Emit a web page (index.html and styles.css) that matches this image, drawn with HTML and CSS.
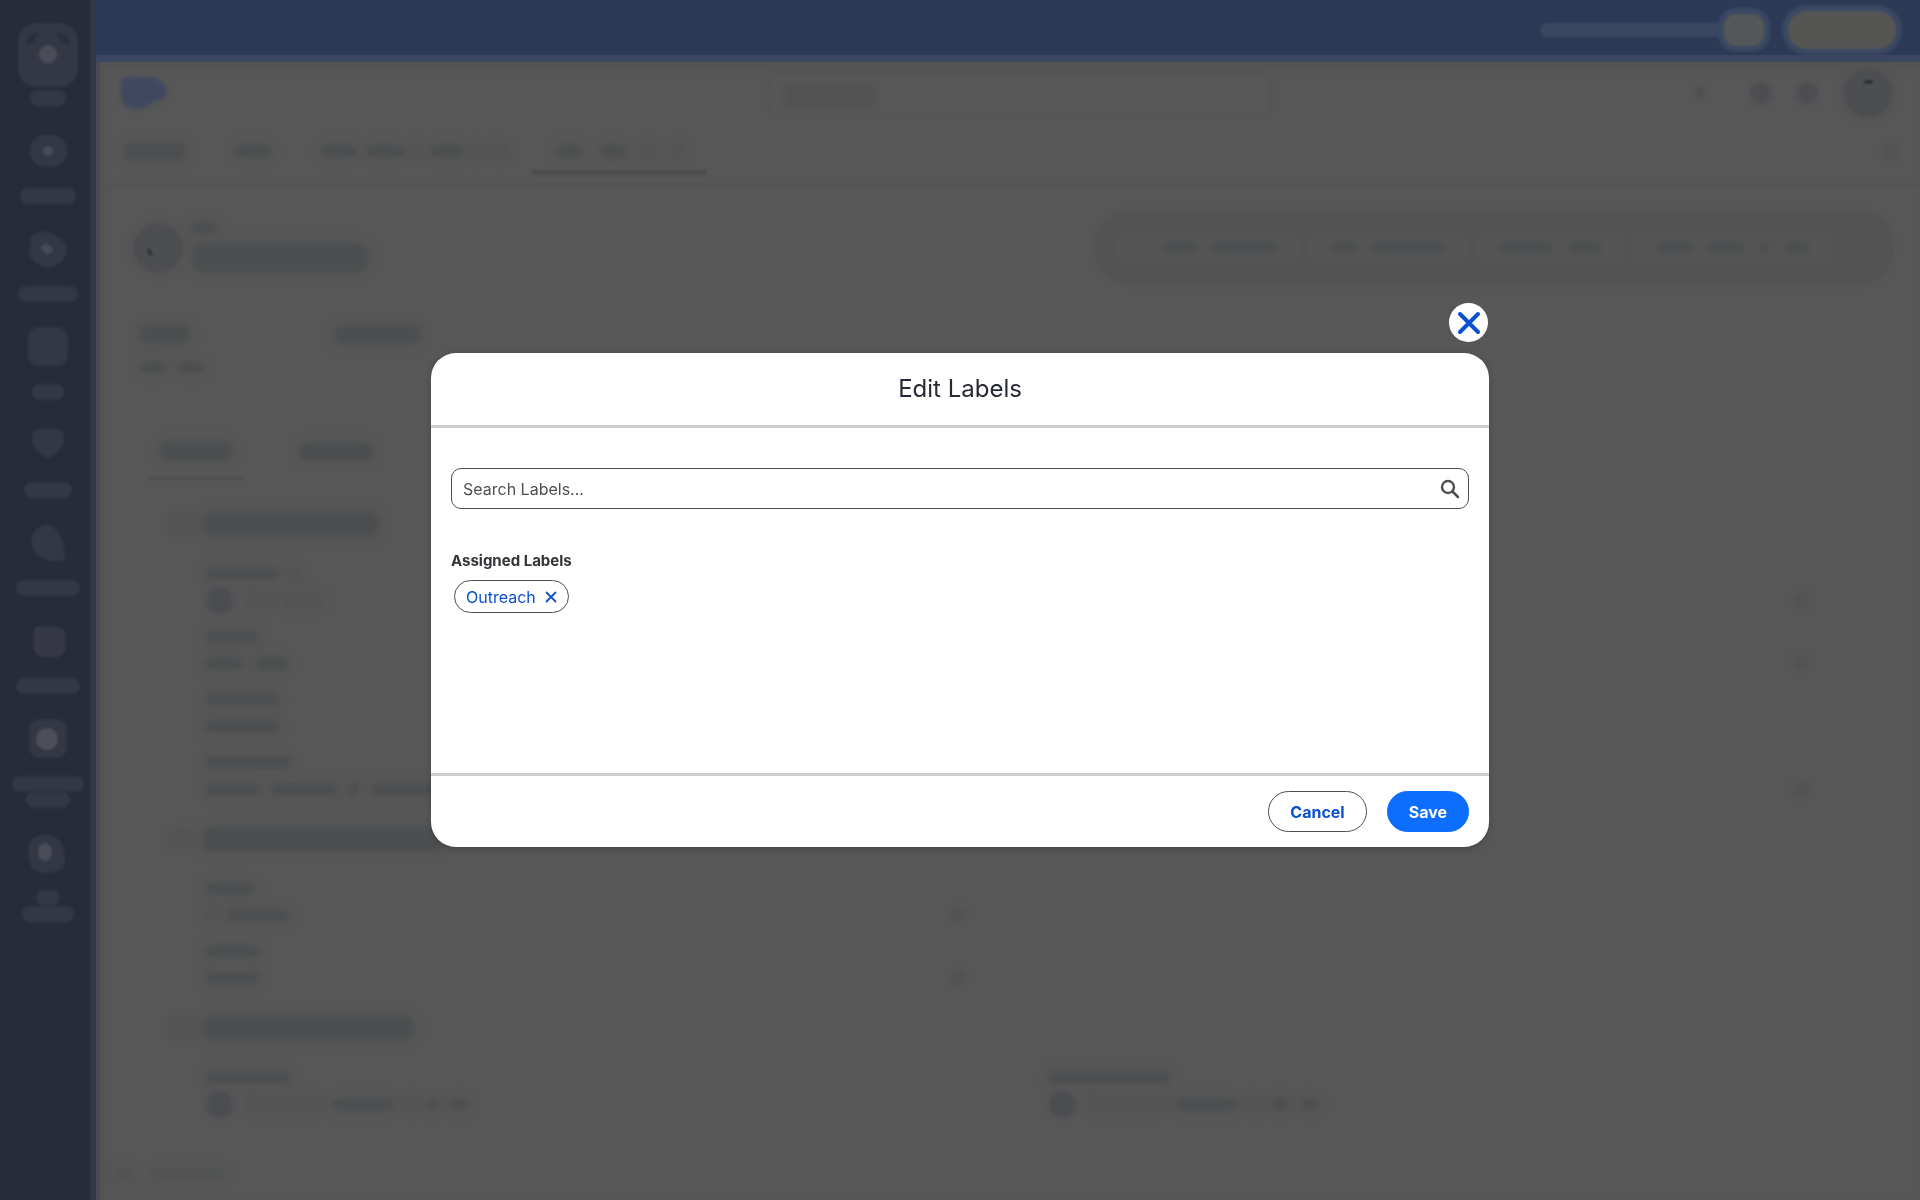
FILE: index.html
```html
<!DOCTYPE html>
<html lang="en">
<head>
    <meta charset="UTF-8">
    <meta name="viewport" content="width=device-width, initial-scale=1.0">
    <title>Edit Labels</title>
    <link rel="stylesheet" href="styles.css">
</head>
<body>
    <div class="app" aria-hidden="true">
        <div class="sidebar">
            <div class="brand">
                <svg width="60" height="64" viewBox="0 0 60 64">
                    <rect width="60" height="64" rx="18" fill="#333844"/>
                    <path d="M9 22 Q9 9 20 10 Q15 22 9 22 Z M51 22 Q51 9 38 10 Q44 22 51 22 Z" fill="#2a2f3c"/>
                    <circle cx="30" cy="31" r="9" fill="#4a4d57"/>
                </svg>
                <span class="nav-label w-36"></span>
            </div>
            <div class="nav-item">
                <svg width="40" height="40" viewBox="0 0 40 40">
                    <rect x="2" y="4" width="37" height="32" rx="15" fill="#333844"/>
                    <circle cx="20" cy="20" r="5" fill="#464b5a"/>
                </svg>
                <span class="nav-label w-56"></span>
            </div>
            <div class="nav-item">
                <svg width="40" height="40" viewBox="0 0 40 40">
                    <path d="M3 8 Q10 -1 22 4 Q38 11 39 20 Q37 37 20 38 Q5 37 1 24 Z" fill="#333844"/>
                    <path d="M12 19 L18 14 L26 21 L19 26 Z" fill="#464b5a"/>
                </svg>
                <span class="nav-label w-60"></span>
            </div>
            <div class="nav-item">
                <svg width="40" height="40" viewBox="0 0 40 40">
                    <rect width="40" height="39" rx="11" fill="#333844"/>
                </svg>
                <span class="nav-label w-32"></span>
            </div>
            <div class="nav-item">
                <svg width="40" height="40" viewBox="0 0 40 40">
                    <path d="M6 6 Q20 0 34 6 Q40 18 30 26 Q20 38 12 28 Q-1 18 6 6 Z" fill="#333844"/>
                </svg>
                <span class="nav-label w-48"></span>
            </div>
            <div class="nav-item">
                <svg width="40" height="40" viewBox="0 0 40 40">
                    <path d="M3 17 Q6 2 20 2 Q31 4 36 22 L37 38 L24 38 Q4 35 3 17 Z" fill="#333844"/>
                </svg>
                <span class="nav-label w-64"></span>
            </div>
            <div class="nav-item">
                <svg width="40" height="40" viewBox="0 0 40 40">
                    <path d="M6 8 Q9 4 19 5 L34 7 Q38 11 38 17 L37 30 Q31 39 20 36 Q8 37 6 28 Z" fill="#363945"/>
                </svg>
                <span class="nav-label w-64"></span>
            </div>
            <div class="nav-item">
                <svg width="40" height="40" viewBox="0 0 40 40">
                    <rect x="1" width="38" height="39" rx="11" fill="#333844"/>
                    <circle cx="19" cy="20" r="11" fill="#4c4f58"/>
                </svg>
                <div class="nav-lines">
                    <span class="nav-label w-72"></span>
                    <span class="nav-label w-44"></span>
                </div>
            </div>
            <div class="nav-item">
                <svg width="40" height="40" viewBox="0 0 40 40">
                    <path d="M3 7 Q18 -5 33 9 Q40 25 35 35 Q20 45 4 35 Q-3 20 3 7 Z" fill="#333844"/>
                    <ellipse cx="17" cy="19" rx="7" ry="9" fill="#4a4d57"/>
                </svg>
                <div class="nav-lines">
                    <span class="nav-label w-24"></span>
                    <span class="nav-label w-52"></span>
                </div>
            </div>
        </div>

        <div class="main">
            <div class="topbar">
                <span class="topbar-text"></span>
                <span class="topbar-badge"></span>
                <span class="topbar-button"></span>
            </div>

            <div class="page">
                <div class="header">
                    <svg class="cloud" width="48" height="34" viewBox="0 0 48 34">
                        <path d="M2 3 Q12 -1 20 1 L36 2 Q48 8 48 15 Q47 24 35 26 Q25 34 17 33 Q6 34 2 24 Z" fill="#3f485f"/>
                    </svg>
                    <div class="search-box"><span class="search-hint"></span></div>
                    <div class="header-icons">
                        <span class="pin"></span>
                        <span class="dot"></span>
                        <span class="dot"></span>
                        <svg class="avatar-large" width="48" height="48" viewBox="0 0 48 48">
                            <rect x="20" y="11" width="9" height="4" rx="2" fill="#2f3032"/>
                        </svg>
                    </div>
                </div>

                <div class="tabs">
                    <div class="tab"><span class="bar bar-tall w-60"></span></div>
                    <div class="tab"><span class="bar w-36"></span></div>
                    <div class="tab">
                        <span class="bar w-36"></span>
                        <span class="bar w-36"></span>
                        <span class="bar faint w-8"></span>
                        <span class="bar w-32"></span>
                        <span class="bar faint w-8"></span>
                        <span class="bar faint w-16"></span>
                    </div>
                    <div class="tab tab-active">
                        <span class="bar w-24"></span>
                        <span class="bar w-24"></span>
                        <span class="bar faint w-8"></span>
                        <span class="bar faint w-8"></span>
                    </div>
                    <span class="pencil"></span>
                </div>

                <div class="record">
                    <svg class="avatar-large" width="48" height="48" viewBox="0 0 48 48">
                        <path d="M13 24 L16 25 L19 32 L15 31 Z" fill="#2f3032"/>
                    </svg>
                    <div class="record-title">
                        <span class="bar w-24"></span>
                        <span class="bar bar-title w-176"></span>
                    </div>
                    <div class="actions">
                        <div class="action"><span class="bar faint w-8"></span><span class="bar w-32"></span><span class="bar w-64"></span></div>
                        <div class="action"><span class="bar w-24"></span><span class="bar w-72"></span></div>
                        <div class="action"><span class="bar w-52"></span><span class="bar w-32"></span></div>
                        <div class="action"><span class="bar w-36"></span><span class="bar w-36"></span><span class="bar w-8"></span><span class="bar w-24"></span></div>
                        <span class="bar faint w-16"></span>
                    </div>
                </div>

                <div class="facts">
                    <div class="fact">
                        <span class="bar bar-tall w-48"></span>
                        <div class="words"><span class="bar w-24"></span><span class="bar w-24"></span></div>
                    </div>
                    <div class="fact"><span class="bar bar-tall w-84"></span></div>
                </div>

                <div class="subtabs">
                    <div class="subtab subtab-active"><span class="bar bar-tall w-72"></span></div>
                    <div class="subtab"><span class="bar bar-tall w-72"></span></div>
                </div>

                <div class="section">
                    <div class="section-head"><span class="chevron"></span><span class="bar bar-heading w-176"></span></div>
                    <div class="rows">
                        <div class="cell">
                            <div class="words"><span class="bar w-72"></span><span class="bar faint w-8"></span></div>
                            <div class="value"><span class="avatar"></span><span class="bar faint w-24"></span><span class="bar faint w-36"></span></div>
                        </div>
                        <div class="cell"><div class="value"><span class="pencil"></span></div></div>
                        <div class="cell">
                            <div class="words"><span class="bar w-52"></span></div>
                            <div class="value"><span class="bar w-36"></span><span class="bar w-32"></span></div>
                        </div>
                        <div class="cell"><div class="value"><span class="pencil"></span></div></div>
                        <div class="cell">
                            <div class="words"><span class="bar w-72"></span></div>
                            <div class="value"><span class="bar w-72"></span></div>
                        </div>
                        <div class="cell"></div>
                        <div class="cell">
                            <div class="words"><span class="bar w-84"></span></div>
                            <div class="value"><span class="bar w-52"></span><span class="bar w-64"></span><span class="bar w-8"></span><span class="bar w-84"></span></div>
                        </div>
                        <div class="cell"><div class="value"><span class="pencil"></span></div></div>
                    </div>
                </div>

                <div class="section">
                    <div class="section-head"><span class="chevron"></span><span class="bar bar-heading w-240"></span></div>
                    <div class="rows">
                        <div class="cell">
                            <div class="words"><span class="bar w-48"></span></div>
                            <div class="value"><span class="bar faint w-8"></span><span class="bar w-60"></span><span class="pencil"></span></div>
                        </div>
                        <div class="cell"></div>
                        <div class="cell">
                            <div class="words"><span class="bar w-52"></span></div>
                            <div class="value"><span class="bar w-52"></span><span class="pencil"></span></div>
                        </div>
                        <div class="cell"></div>
                    </div>
                </div>

                <div class="section">
                    <div class="section-head"><span class="chevron"></span><span class="bar bar-heading w-212"></span></div>
                    <div class="rows">
                        <div class="cell">
                            <div class="words"><span class="bar w-84"></span></div>
                            <div class="value"><span class="avatar"></span><span class="bar faint w-72"></span><span class="bar w-60"></span><span class="bar faint w-8"></span><span class="bar w-8"></span><span class="bar w-16"></span></div>
                        </div>
                        <div class="cell">
                            <div class="words"><span class="bar w-120"></span></div>
                            <div class="value"><span class="avatar"></span><span class="bar faint w-72"></span><span class="bar w-60"></span><span class="bar faint w-8"></span><span class="bar w-16"></span><span class="bar w-16"></span></div>
                        </div>
                    </div>
                </div>

                <div class="utility"><span class="bar faint w-16"></span><span class="bar faint w-72"></span></div>
            </div>
        </div>
    </div>

    <div class="overlay">
        <div class="modal" role="dialog" aria-labelledby="modal-title">
            <button class="modal-close" type="button" aria-label="Close">
                <svg width="24" height="24" viewBox="0 0 24 24">
                    <path d="M3 3 L21 21 M21 3 L3 21" stroke="#0b50d0" stroke-width="4" stroke-linecap="round"/>
                </svg>
            </button>
            <div class="modal-header">
                <h2 id="modal-title">Edit Labels</h2>
            </div>
            <div class="modal-body">
                <div class="search">
                    <input type="text" placeholder="Search Labels..." aria-label="Search Labels">
                    <svg width="20" height="20" viewBox="0 0 20 20">
                        <circle cx="8" cy="8" r="6" fill="none" stroke="#4f4f4f" stroke-width="2.4"/>
                        <path d="M12.5 12.5 L18 18" stroke="#4f4f4f" stroke-width="2.6" stroke-linecap="round"/>
                    </svg>
                </div>
                <h3>Assigned Labels</h3>
                <div class="chips">
                    <button class="chip" type="button">
                        Outreach
                        <svg width="12" height="12" viewBox="0 0 12 12">
                            <path d="M1.5 1.5 L10.5 10.5 M10.5 1.5 L1.5 10.5" stroke="#0b50d0" stroke-width="1.8" stroke-linecap="round"/>
                        </svg>
                    </button>
                </div>
            </div>
            <div class="modal-footer">
                <button class="btn" type="button">Cancel</button>
                <button class="btn btn-primary" type="button">Save</button>
            </div>
        </div>
    </div>
</body>
</html>
```
FILE: styles.css
```css
* {
    margin: 0;
    padding: 0;
    box-sizing: border-box;
}

body {
    font-family: Inter, "Liberation Sans", sans-serif;
    background: #575757;
    overflow: hidden;
}

button,
input {
    font-family: inherit;
}

/* Page behind the dialog */
.app {
    display: flex;
    min-height: 100vh;
}

.sidebar {
    display: flex;
    flex-direction: column;
    align-items: center;
    gap: 25px;
    width: 96px;
    padding-top: 23px;
    background: linear-gradient(90deg, #272c3b 89px, #333747 92px);
}

.sidebar svg {
    display: block;
    filter: blur(1px);
}

.brand {
    display: flex;
    flex-direction: column;
    align-items: center;
    gap: 3px;
}

.nav-item {
    display: flex;
    flex-direction: column;
    align-items: center;
    gap: 17px;
}

.nav-lines {
    display: flex;
    flex-direction: column;
    align-items: center;
}

.nav-label {
    height: 16px;
    border-radius: 8px;
    background: #333844;
    filter: blur(1px);
}

.main {
    flex: 1;
    display: flex;
    flex-direction: column;
    min-width: 0;
}

.topbar {
    display: flex;
    align-items: center;
    justify-content: flex-end;
    height: 62px;
    padding: 4px 24px 0 0;
    background: #2c3a56;
    border-bottom: 7px solid #3c4562;
}

.topbar-text {
    width: 184px;
    height: 14px;
    border-radius: 7px;
    background: #394861;
    filter: blur(1px);
}

.topbar-badge {
    width: 40px;
    height: 32px;
    margin-right: 24px;
    border-radius: 12px;
    background: #555657;
    box-shadow: 0 0 2px 6px #3b4963;
    filter: blur(1px);
}

.topbar-button {
    width: 108px;
    height: 38px;
    border-radius: 19px;
    background: #555654;
    box-shadow: 0 0 2px 6px #3b4963;
    filter: blur(1px);
}

.page {
    flex: 1;
    display: flex;
    flex-direction: column;
    border-left: 4px solid #484a5a;
    box-shadow: inset 4px 4px 6px #515351;
}

.header {
    display: grid;
    grid-template-columns: 1fr 505px 1fr;
    align-items: center;
    height: 62px;
    padding-left: 19px;
}

.cloud {
    filter: blur(2px);
}

.search-box {
    height: 45px;
    padding: 12px 16px;
    border: 2px solid #545454;
    border-radius: 10px;
    filter: blur(1px);
}

.search-hint {
    display: block;
    width: 90px;
    height: 22px;
    background: #525252;
    filter: blur(2px);
}

.header-icons {
    display: flex;
    align-items: center;
    justify-content: flex-end;
    gap: 26px;
    padding-right: 28px;
}

.pin {
    width: 8px;
    height: 14px;
    margin-right: 20px;
    border-radius: 4px;
    background: #4f4f51;
    filter: blur(2px);
}

.dot {
    width: 21px;
    height: 22px;
    border-radius: 10px;
    background: #4c4e52;
    filter: blur(2px);
}

.avatar-large {
    border-radius: 50%;
    background: #4c4e51;
    box-shadow: 0 0 4px 4px #545454;
    filter: blur(1px);
}

.tabs {
    display: flex;
    align-items: flex-start;
    height: 63px;
    border-bottom: 4px solid #545454;
}

.tabs .pencil {
    margin: 20px 22px 0 auto;
}

.tab {
    display: flex;
    align-items: center;
    gap: 10px;
    height: 51px;
    padding: 8px 25px 0;
    border-bottom: 5px solid transparent;
}

.tab-active {
    gap: 20px;
    border-bottom-color: #4b4c4e;
    filter: blur(1px);
}

.record {
    display: flex;
    align-items: center;
    gap: 10px;
    padding: 24px 27px 0 34px;
}

.record-title {
    display: flex;
    flex-direction: column;
    gap: 10px;
}

.actions {
    display: flex;
    align-items: center;
    gap: 8px;
    height: 73px;
    margin-left: auto;
    padding: 0 36px 0 22px;
    border-radius: 36px;
    background: #535353;
    box-shadow: 0 0 4px #535353;
}

.action {
    display: flex;
    align-items: center;
    gap: 16px;
    height: 32px;
    padding: 0 24px;
    border-radius: 12px;
    background: #555555;
}

.facts {
    display: flex;
    margin-top: 42px;
    padding-left: 41px;
}

.fact {
    display: flex;
    flex-direction: column;
    gap: 17px;
    width: 194px;
}

.subtabs {
    display: flex;
    gap: 44px;
    margin-top: 69px;
    padding-left: 48px;
}

.subtab {
    padding: 0 12px 17px;
    border-bottom: 3px solid transparent;
}

.subtab .bar {
    display: block;
}

.subtab-active {
    border-bottom-color: #4f5051;
    filter: blur(1px);
}

.section {
    margin-top: 26px;
    padding-left: 68px;
}

.subtabs + .section {
    margin-top: 32px;
}

.section-head {
    display: flex;
    align-items: center;
    gap: 8px;
}

.chevron {
    width: 26px;
    height: 22px;
    border-radius: 8px;
    background: #545454;
    filter: blur(2px);
}

.rows {
    display: grid;
    grid-template-columns: 1fr 1fr;
    row-gap: 17px;
    margin-top: 30px;
    padding: 0 28px 0 38px;
}

.cell {
    display: flex;
    flex-direction: column;
    justify-content: flex-end;
    gap: 8px;
    min-height: 46px;
    padding-right: 83px;
}

.words {
    display: flex;
    align-items: center;
    gap: 14px;
    height: 14px;
}

.value {
    display: flex;
    align-items: center;
    gap: 14px;
    height: 24px;
}

.value .pencil {
    margin-left: auto;
}

.avatar {
    width: 27px;
    height: 27px;
    border-radius: 50%;
    background: #4b4d51;
    filter: blur(2px);
}

.pencil {
    width: 16px;
    height: 16px;
    border-radius: 8px;
    background: #535353;
    filter: blur(2px);
}

.utility {
    display: flex;
    align-items: center;
    gap: 20px;
    margin-top: auto;
    padding: 0 16px 20px;
}

/* Smudged text bars */
.bar {
    height: 11px;
    border-radius: 6px;
    background: #4c4e50;
    box-shadow: 0 0 4px 4px #545555;
    filter: blur(2px);
}

.bar-tall {
    height: 17px;
}

.bar-heading {
    height: 24px;
    border-radius: 10px;
}

.bar-title {
    height: 30px;
    border-radius: 14px;
}

.faint {
    background: #525353;
}

.w-8 { width: 8px; }
.w-16 { width: 16px; }
.w-24 { width: 24px; }
.w-32 { width: 32px; }
.w-36 { width: 36px; }
.w-44 { width: 44px; }
.w-48 { width: 48px; }
.w-52 { width: 52px; }
.w-56 { width: 56px; }
.w-60 { width: 60px; }
.w-64 { width: 64px; }
.w-72 { width: 72px; }
.w-84 { width: 84px; }
.w-120 { width: 120px; }
.w-176 { width: 176px; }
.w-212 { width: 212px; }
.w-240 { width: 240px; }

/* Dialog */
.overlay {
    position: fixed;
    inset: 0;
    display: flex;
    align-items: center;
    justify-content: center;
}

.modal {
    position: relative;
    width: 90%;
    max-width: 1058px;
    background: #fff;
    border-radius: 25px;
    box-shadow: 0 2px 6px rgba(0, 0, 0, 0.2);
}

.modal-close {
    position: absolute;
    top: -50px;
    right: 1px;
    display: flex;
    align-items: center;
    justify-content: center;
    width: 39px;
    height: 39px;
    border: none;
    border-radius: 50%;
    background: #fff;
    cursor: pointer;
}

.modal-header {
    padding: 20px;
    border-bottom: 3px solid #cecece;
    text-align: center;
}

.modal-header h2 {
    font-size: 24px;
    line-height: 32px;
    font-weight: 400;
    color: #272a36;
}

.modal-body {
    min-height: 345px;
    padding: 40px 20px;
}

.search {
    display: flex;
    align-items: center;
    height: 41px;
    padding: 0 8px 0 11px;
    border: 1px solid #4f4f4f;
    border-radius: 10px;
}

.search input {
    flex: 1;
    border: none;
    outline: none;
    background: none;
    font-size: 16px;
    line-height: 24px;
    color: #4f4f4f;
}

.search input::placeholder {
    color: #4f4f4f;
    opacity: 1;
}

.modal-body h3 {
    margin-top: 40px;
    font-size: 15px;
    line-height: 24px;
    font-weight: 700;
    color: #333438;
}

.chips {
    display: flex;
    gap: 8px;
    padding: 7px 3px;
}

.chip {
    display: flex;
    align-items: center;
    gap: 9px;
    height: 33px;
    padding: 0 11px;
    border: 1px solid #4f4f4f;
    border-radius: 17px;
    background: #fff;
    font-size: 16px;
    color: #0b50d0;
    cursor: pointer;
}

.modal-footer {
    display: flex;
    justify-content: flex-end;
    gap: 20px;
    padding: 15px 20px;
    border-top: 3px solid #cecece;
}

.btn {
    height: 41px;
    padding: 0 21px;
    border: 1px solid #4f4f4f;
    border-radius: 21px;
    background: #fff;
    font-size: 16px;
    font-weight: 700;
    color: #0b50d0;
    cursor: pointer;
}

.btn-primary {
    border-color: #0d6efd;
    background: #0d6efd;
    color: #fff;
}
```
